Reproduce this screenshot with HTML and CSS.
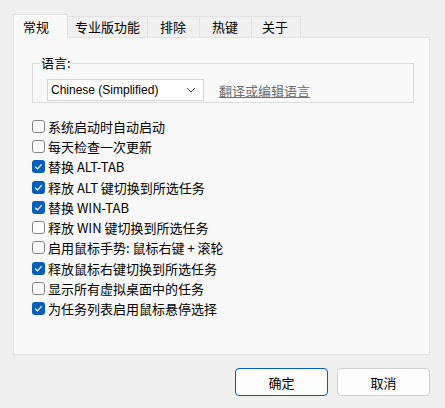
FILE: index.html
```html
<!DOCTYPE html>
<html lang="zh-CN">
<head>
  <meta charset="UTF-8" />
  <title>设置</title>
  <link rel="stylesheet" href="styles.css">
</head>
<body>
  <div class="dialog">
    <div class="tabs">
      <div class="tab active">常规</div>
      <div class="tab">专业版功能</div>
      <div class="tab">排除</div>
      <div class="tab">热键</div>
      <div class="tab">关于</div>
    </div>
    <div class="panel">
      <fieldset class="group">
        <legend>语言:</legend>
        <div class="lang-row">
          <div class="select">
            <span>Chinese (Simplified)</span>
            <svg width="10" height="6" viewBox="0 0 10 6"><path d="M1 1 L5 5 L9 1" fill="none" stroke="#555" stroke-width="1"/></svg>
          </div>
          <a class="link">翻译或编辑语言</a>
        </div>
      </fieldset>
      <ul class="options">
        <li><span class="box"></span>系统启动时自动启动</li>
        <li><span class="box"></span>每天检查一次更新</li>
        <li><span class="box on"></span>替换 ALT-TAB</li>
        <li><span class="box on"></span>释放 ALT 键切换到所选任务</li>
        <li><span class="box on"></span>替换 WIN-TAB</li>
        <li><span class="box"></span>释放 WIN 键切换到所选任务</li>
        <li><span class="box"></span>启用鼠标手势: 鼠标右键 + 滚轮</li>
        <li><span class="box on"></span>释放鼠标右键切换到所选任务</li>
        <li><span class="box"></span>显示所有虚拟桌面中的任务</li>
        <li><span class="box on"></span>为任务列表启用鼠标悬停选择</li>
      </ul>
    </div>
    <div class="buttons">
      <button class="btn primary">确定</button>
      <button class="btn">取消</button>
    </div>
  </div>
</body>
</html>
```

FILE: styles.css
```css
body { margin: 0; background: #f0f0f0; font-family: "Noto Sans CJK SC", "Noto Sans", sans-serif; font-size: 13px; color: #000; }
.dialog { width: 445px; height: 408px; padding: 13px 15px 0 13px; box-sizing: border-box; }
.tabs { display: flex; align-items: flex-end; height: 24px; }
.tab { height: 21px; line-height: 20px; padding: 0 7px; border: 1px solid #e3e3e3; border-bottom: none; border-left: none; background: #f0f0f0; box-sizing: border-box; }
.tab:nth-child(3), .tab:nth-child(4) { padding: 0 13px 0 12px; }
.tab:nth-child(5) { padding: 0 12px 0 10px; }
.tab.active { height: 24px; line-height: 23px; padding: 0 18px 0 9px; background: #f9f9f9; border-left: 1px solid #e3e3e3; position: relative; top: 1px; }
.panel { height: 318px; background: #f9f9f9; border: 1px solid #e3e3e3; box-sizing: border-box; padding: 18px 16px 0 18px; }
.group { margin: 0; border: 1px solid #dcdcdc; padding: 0 14px; height: 47px; box-sizing: border-box; width: 382px; }
.group legend { padding: 0 1px; margin-left: -7px; line-height: 14px; }
.lang-row { display: flex; align-items: center; gap: 15px; margin-top: 9px; }
.select { width: 157px; height: 22px; box-sizing: border-box; background: #fff; border: 1px solid #d5d5d5; display: flex; align-items: center; justify-content: space-between; padding: 0 7px 0 3px; font-family: "Liberation Sans", "Noto Sans CJK SC", sans-serif; font-size: 12px; }
.link { color: #6d6d6d; text-decoration: underline; }
.options { list-style: none; margin: 13px 0 0 0; padding: 0; }
.options li { height: 20.3px; display: flex; align-items: center; gap: 3px; }
.box { width: 13px; height: 13px; box-sizing: border-box; border: 1px solid #858585; border-radius: 3px; background: #fff; }
.box.on { border: none; background: #005fb8 url("data:image/svg+xml;utf8,<svg xmlns='http://www.w3.org/2000/svg' width='13' height='13'><path d='M3.2 6.8 L5.5 9 L9.8 4.2' fill='none' stroke='white' stroke-width='1.2'/></svg>") no-repeat center; }
.buttons { display: flex; justify-content: flex-end; gap: 9px; margin-top: 13px; }
.btn { width: 93px; height: 28px; background: #fdfdfd; border: 1px solid #d0d0d0; border-radius: 4px; font: inherit; color: #000; }
.btn.primary { border-color: #005fb8; }
```
